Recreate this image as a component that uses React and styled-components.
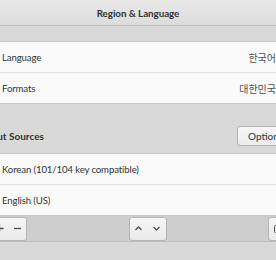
import styled, { createGlobalStyle } from "styled-components"

const Global = createGlobalStyle`
    body {
        margin: 0;
        background-color: #d9d9d9;
        overflow: hidden;
        font-family: Lato, "Noto Sans CJK KR", sans-serif;
        color: #2e3436;
    }
`
const Header = styled.header`
    height: 25px;
    border-bottom: 1px solid #bcbcbc;
    background: linear-gradient(#e9e9e9, #dcdcdc);
    display: flex;
    align-items: center;
    justify-content: center;
    font-size: 9.8px;
    font-weight: 700;
    letter-spacing: -0.05px;
`
const Panel = styled.main`
    margin-left: -22px;
    width: 312px;
    padding-top: 15px;
`
const List = styled.ul`
    list-style: none;
    margin: 0;
    padding: 0;
    background-color: #fafafa;
    border: 1px solid #c9c9c9;
`
const Row = styled.li`
    height: 30px;
    display: flex;
    align-items: center;
    justify-content: space-between;
    padding: 0 13px 0 23px;
    font-size: 9.6px;
    letter-spacing: -0.12px;
    border-top: ${p => (p.$first ? "none" : "1px solid #e2e2e2")};
`
const Value = styled.span`
    color: #4a4f51;
    font-family: "Noto Sans CJK KR", sans-serif;
    font-size: 10px;
    letter-spacing: 0;
`
const SectionHead = styled.div`
    height: 20px;
    margin: 22px 0 7px;
    display: flex;
    align-items: center;
    justify-content: space-between;
    padding-left: 5px;
    font-size: 10px;
    font-weight: 700;
`
const Button = styled.button`
    height: 20px;
    width: 53px;
    padding: 0 0 0 10px;
    text-align: left;
    border: 1px solid #b3b3b3;
    border-radius: 3px;
    background: linear-gradient(#f7f7f7, #ececec);
    font-family: inherit;
    font-size: 10px;
    color: #2e3436;
`
const Toolbar = styled.div`
    height: 25px;
    border-bottom: 1px solid #bdbdbd;
    background-color: #cecece;
    display: flex;
    align-items: center;
    justify-content: space-between;
    padding: 0 0 0 11px;
`
const Linked = styled.div`
    display: flex;
    height: 22px;
    border: 1px solid #b5b5b5;
    border-radius: 3px;
    background: linear-gradient(#f6f6f6, #eaeaea);
`
const Seg = styled.span`
    width: ${p => p.$w || 18}px;
    display: flex;
    align-items: center;
    justify-content: center;
`

const Icon = ({ d }) => (
    <svg width="9" height="9" viewBox="0 0 9 9" fill="none" stroke="#4a4f51" strokeWidth="1.3">
        <path d={d} />
    </svg>
)

export default function App() {
    return (
        <>
            <Global />
            <Header>Region &amp; Language</Header>
            <Panel>
                <List>
                    <Row $first>Language<Value>한국어</Value></Row>
                    <Row>Formats<Value>대한민국</Value></Row>
                </List>
                <SectionHead>
                    Input Sources
                    <Button>Options</Button>
                </SectionHead>
                <List>
                    <Row $first>Korean (101/104 key compatible)</Row>
                    <Row>English (US)</Row>
                </List>
                <Toolbar>
                    <Linked>
                        <Seg><Icon d="M0.5 4.5h8M4.5 0.5v8" /></Seg>
                        <Seg><Icon d="M1 4.5h7" /></Seg>
                    </Linked>
                    <Linked>
                        <Seg><Icon d="M1.5 6l3-3 3 3" /></Seg>
                        <Seg><Icon d="M1.5 3l3 3 3-3" /></Seg>
                    </Linked>
                    <Linked>
                        <Seg $w={20}>
                            <svg width="10" height="8" viewBox="0 0 10 8">
                                <rect x="0.5" y="0.5" width="9" height="7" rx="1" fill="none" stroke="#4a4f51" />
                                <path d="M2 3h1M4.5 3h1M7 3h1M3 5.5h4" stroke="#4a4f51" />
                            </svg>
                        </Seg>
                    </Linked>
                </Toolbar>
            </Panel>
        </>
    )
}
